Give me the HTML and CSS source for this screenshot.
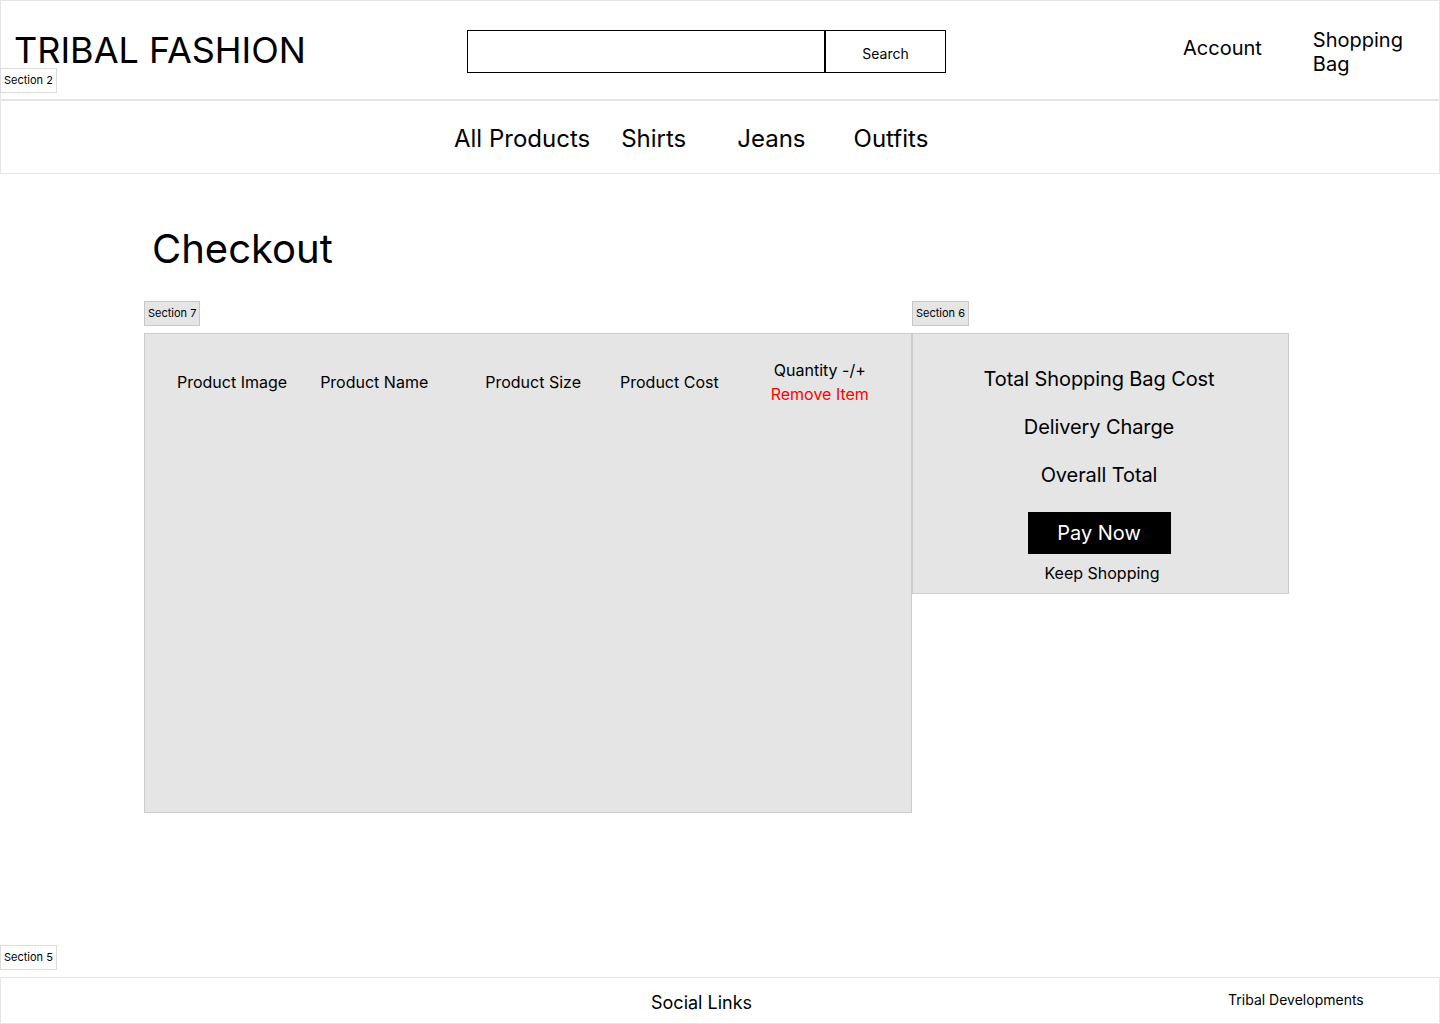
FILE: index.html
```html
<!DOCTYPE html>
<html lang="en">
<head>
<meta charset="utf-8">
<title>Tribal Fashion - Checkout</title>
<link rel="stylesheet" href="styles.css">
</head>
<body>
<div class="page">
  <header class="header">
    <div class="logo">TRIBAL FASHION</div>
    <span class="tag tag-header">Section 2</span>
    <form class="search">
      <input class="search-input" type="text" aria-label="Search">
      <button class="search-btn" type="button">Search</button>
    </form>
    <a class="account">Account</a>
    <a class="bag">Shopping<br>Bag</a>
  </header>
  <nav class="nav">
    <a class="nav-all">All Products</a>
    <a class="nav-shirts">Shirts</a>
    <a class="nav-jeans">Jeans</a>
    <a class="nav-outfits">Outfits</a>
  </nav>
  <main class="main">
    <h1 class="title">Checkout</h1>
    <div class="columns">
      <section class="col-items">
        <span class="tag tag-grey">Section 7</span>
        <div class="items">
          <div class="th th-image">Product Image</div>
          <div class="th th-name">Product Name</div>
          <div class="th th-size">Product Size</div>
          <div class="th th-cost">Product Cost</div>
          <div class="th th-qty">
            <span>Quantity -/+</span>
            <span class="remove">Remove Item</span>
          </div>
        </div>
      </section>
      <section class="col-summary">
        <span class="tag tag-grey">Section 6</span>
        <div class="summary">
          <div class="sum-line first">Total Shopping Bag Cost</div>
          <div class="sum-line">Delivery Charge</div>
          <div class="sum-line">Overall Total</div>
          <button class="pay" type="button">Pay Now</button>
          <a class="keep">Keep Shopping</a>
        </div>
      </section>
    </div>
  </main>
  <div class="footer-wrap">
    <span class="tag tag-footer">Section 5</span>
    <footer class="footer">
      <span class="social">Social Links</span>
      <span class="dev">Tribal Developments</span>
    </footer>
  </div>
</div>
</body>
</html>
```

FILE: styles.css
```css
* { box-sizing: border-box; }
html, body { margin: 0; padding: 0; }
body {
  font-family: Inter, "Noto Sans", "Liberation Sans", sans-serif;
  color: #000;
  background: #fff;
  width: 1440px;
  height: 1024px;
  overflow: hidden;
}
a { color: inherit; text-decoration: none; }
.page {
  display: flex;
  flex-direction: column;
  height: 1024px;
}
.header {
  position: relative;
  height: 101px;
  border: 1px solid #e5e5e5;
  border-bottom-width: 2px;
  display: flex;
  align-items: flex-start;
}
.logo {
  font-size: 36px;
  line-height: 1;
  margin: 31px 0 0 13px;
  width: 453px;
}
.tag {
  display: inline-block;
  font-size: 11px;
  line-height: 23px;
  height: 25px;
  padding: 0 3px;
  border: 1px solid #dcdcdc;
  background: #fff;
  color: #000;
  white-space: nowrap;
}
.tag-header {
  position: absolute;
  left: -1px;
  top: 67px;
}
.search {
  display: flex;
  margin: 29px 0 0 0;
}
.search-input {
  width: 357px;
  height: 43px;
  border: 1.5px solid #000;
  border-right: none;
  margin: 0;
  padding: 0;
  background: #fff;
  outline: none;
}
.search-btn {
  width: 122px;
  height: 43px;
  border: 1.5px solid #000;
  border-left-width: 2px;
  background: #fff;
  font-family: inherit;
  font-size: 14px;
  color: #000;
  margin: 0;
  padding: 3px 0 0 0;
}
.account {
  font-size: 20px;
  line-height: 24px;
  margin: 35px 0 0 237px;
}
.bag {
  font-size: 20px;
  line-height: 24px;
  margin: 27px 0 0 51px;
}
.nav {
  height: 73px;
  border: 1px solid #e5e5e5;
  border-top: none;
  display: flex;
  align-items: center;
  font-size: 24px;
  line-height: 30px;
  padding-top: 3px;
}
.nav-all { margin-left: 453px; }
.nav-shirts { margin-left: 31px; }
.nav-jeans { margin-left: 51px; }
.nav-outfits { margin-left: 48px; }
.main {
  flex: 1;
  padding-left: 144px;
}
.title {
  font-size: 40px;
  font-weight: 400;
  line-height: 48px;
  margin: 51px 0 0 8px;
}
.columns {
  display: flex;
  margin-top: 28px;
}
.col-items { width: 768px; }
.col-summary { width: 377px; }
.tag-grey {
  background: #e5e5e5;
  border-color: #c8c8c8;
  margin-bottom: 7px;
}
.items {
  position: relative;
  height: 480px;
  background: #e5e5e5;
  border: 1px solid #cccccc;
  display: flex;
  align-items: flex-start;
  font-size: 16px;
  line-height: 24px;
}
.th { margin-top: 36px; }
.th-image { margin-left: 32px; }
.th-name { margin-left: 33px; }
.th-size { margin-left: 57px; }
.th-cost { margin-left: 39px; }
.th-qty {
  margin-left: 52px;
  margin-top: 24px;
  display: flex;
  flex-direction: column;
  align-items: center;
}
.remove { color: #ff0000; }
.summary {
  height: 261px;
  background: #e5e5e5;
  border: 1px solid #cccccc;
  display: flex;
  flex-direction: column;
  align-items: center;
  font-size: 20px;
  line-height: 24px;
  padding-right: 3px;
}
.sum-line { margin-top: 24px; letter-spacing: -0.1px; }
.sum-line.first { margin-top: 33px; }
.pay {
  margin-top: 25px;
  width: 143px;
  height: 42px;
  background: #000;
  color: #fff;
  border: none;
  font-family: inherit;
  font-size: 20px;
  padding: 0;
}
.keep {
  font-size: 16px;
  line-height: 20px;
  margin-top: 9px;
  margin-left: 6px;
}
.footer-wrap {
  display: flex;
  flex-direction: column;
  align-items: flex-start;
}
.tag-footer { margin-left: 0; margin-bottom: 7px; }
.footer {
  width: 1440px;
  height: 47px;
  border: 1px solid #e5e5e5;
  display: flex;
  align-items: center;
  position: relative;
}
.social {
  font-size: 18px;
  margin-left: 650px;
  margin-top: 3px;
}
.dev {
  font-size: 14px;
  margin-left: 476px;
  margin-top: -2px;
}
```
